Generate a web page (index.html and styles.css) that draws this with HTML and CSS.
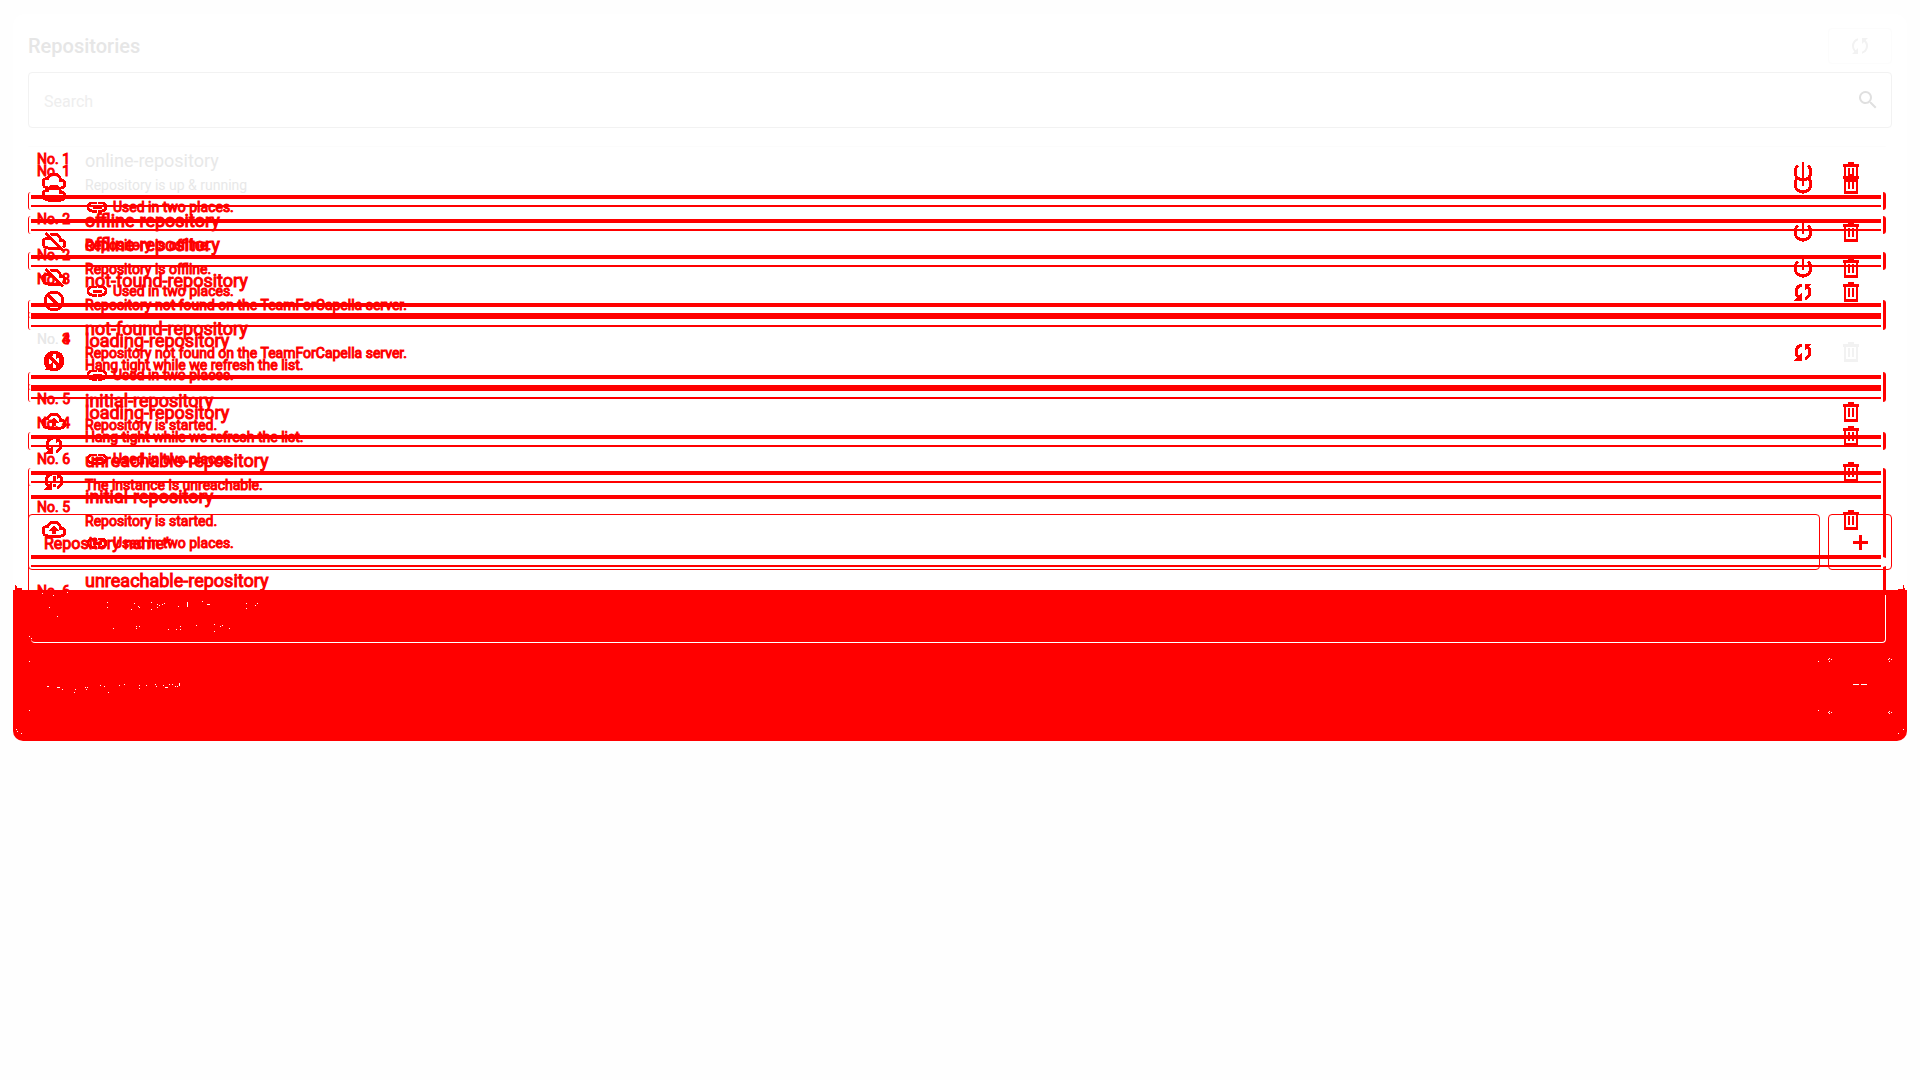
FILE: index.html
```
<!DOCTYPE html>
<html lang="en">
<head>
<meta charset="utf-8">
<title>Repositories</title>
<link rel="stylesheet" href="styles.css">
</head>
<body>
<svg class="sprite" aria-hidden="true">
  <symbol id="cloud" viewBox="0 0 24 24"><path d="M19.35 10.04A7.49 7.49 0 0 0 12 4C9.11 4 6.6 5.64 5.35 8.04A5.994 5.994 0 0 0 0 14c0 3.31 2.69 6 6 6h13c2.76 0 5-2.24 5-5 0-2.64-2.05-4.78-4.650-4.960zM19 18H6c-2.210 0-4-1.790-4-4s1.790-4 4-4h.71C7.370 7.690 9.480 6 12 6c3.040 0 5.500 2.460 5.500 5.500v.5H19c1.660 0 3 1.340 3 3s-1.340 3-3 3z"/></symbol>
  <symbol id="cloud-off" viewBox="0 0 24 24"><path d="M24 15c0-2.640-2.050-4.780-4.650-4.960A7.490 7.490 0 0 0 12 4c-1.330 0-2.570.36-3.650.97l1.490 1.490C10.510 6.170 11.230 6 12 6c3.040 0 5.500 2.460 5.500 5.500v.5H19a2.996 2.996 0 0 1 1.790 5.400l1.410 1.410c1.090-.92 1.800-2.270 1.800-3.810zM4.410 3.860 3 5.270l2.770 2.770h-.42A5.994 5.994 0 0 0 0 14c0 3.310 2.690 6 6 6h11.730l2 2 1.410-1.410zM7.730 10l8 8H6c-2.210 0-4-1.790-4-4s1.790-4 4-4h1.730z"/></symbol>
  <symbol id="block" viewBox="0 0 24 24"><path d="M12 2C6.480 2 2 6.480 2 12s4.480 10 10 10 10-4.480 10-10S17.520 2 12 2zM4 12c0-4.420 3.580-8 8-8 1.850 0 3.550.63 4.900 1.690L5.690 16.900A7.902 7.902 0 0 1 4 12zm8 8c-1.850 0-3.550-.63-4.900-1.690L18.310 7.100A7.902 7.902 0 0 1 20 12c0 4.420-3.580 8-8 8z" transform="translate(24 0) scale(-1 1)"/></symbol>
  <symbol id="sync" viewBox="0 0 24 24"><path d="M10 4.260v2.090a6 6 0 0 0-2.240 9.890L10 14v6H4l2.340-2.340A7.950 7.950 0 0 1 4 12c0-3.730 2.550-6.850 6-7.740zM20 4h-6v6l2.240-2.240A6 6 0 0 1 14 17.650v2.090a7.990 7.990 0 0 0 3.660-13.400z"/></symbol>
  <symbol id="problem" viewBox="0 0 24 24"><path d="M3 12c0 2.210.91 4.200 2.360 5.640L3 20h6v-6l-2.240 2.240A6.003 6.003 0 0 1 9 6.350V4.260C5.550 5.150 3 8.270 3 12zm8 5h2v-2h-2zM21 4h-6v6l2.240-2.240A6.003 6.003 0 0 1 15 17.650v2.090a7.990 7.990 0 0 0 3.640-13.380zM11 13h2V7h-2z"/></symbol>
  <symbol id="upload" viewBox="0 0 24 24"><path d="M19.350 10.040A7.490 7.490 0 0 0 12 4C9.110 4 6.600 5.640 5.350 8.040A5.994 5.994 0 0 0 0 14c0 3.310 2.690 6 6 6h13c2.760 0 5-2.240 5-5 0-2.640-2.050-4.780-4.650-4.960zM19 18H6c-2.210 0-4-1.790-4-4s1.790-4 4-4h.71C7.370 7.690 9.480 6 12 6c3.040 0 5.500 2.460 5.500 5.500v.5H19c1.660 0 3 1.340 3 3s-1.340 3-3 3zM8 13h2.550v3h2.900v-3H16l-4-4z"/></symbol>
  <symbol id="power" viewBox="0 0 24 24"><path d="M12.500 2h-1v11h1zm5.330 3.170-1.420 1.420A6.920 6.920 0 0 1 19 12a7 7 0 1 1-11.420-5.420L6.170 5.170A9 9 0 1 0 21 12c0-2.740-1.230-5.180-3.170-6.830z"/></symbol>
  <symbol id="trash" viewBox="0 0 24 24"><path d="M9 2v2H4v3h1v15h14V7h1V4h-5V2zM7 7h10v12H7zm2 1v9h2V8zm4 0v9h2V8z" fill-rule="evenodd" stroke="none"/></symbol>
  <symbol id="link" viewBox="0 0 24 24"><path d="M3.900 12A3.100 3.100 0 0 1 7 8.900h4V7H7a5 5 0 0 0 0 10h4v-1.900H7A3.100 3.100 0 0 1 3.900 12zM8 13h8v-2H8zm9-6h-4v1.900h4a3.100 3.100 0 0 1 0 6.200h-4V17h4a5 5 0 0 0 0-10z"/></symbol>
  <symbol id="search" viewBox="0 0 24 24"><path d="M15.500 14h-.79l-.28-.27A6.500 6.500 0 1 0 13.730 14.430l.27.28v.79l5 4.990L20.490 19zm-6 0a4.500 4.500 0 1 1 0-9 4.500 4.500 0 0 1 0 9z"/></symbol>
  <symbol id="plus" viewBox="0 0 24 24"><path d="M19 13h-6v6h-2v-6H5v-2h6V5h2v6h6z"/></symbol>
</svg>
<main class="panel">
  <header class="head">
    <h1 class="title">Repositories</h1>
    <button class="refresh" aria-label="Refresh"><svg class="icon"><use href="#sync"/></svg></button>
  </header>
  <label class="search"><input class="search-input" type="text" placeholder="Search" aria-label="Search"><svg class="icon"><use href="#search"/></svg></label>
  <div class="stack">
    <section class="layer">
      <ul class="list">
        <li class="card"><div class="state"><span>No. 1</span><svg class="icon"><use href="#cloud"/></svg></div><div class="info faint"><div class="name">online-repository</div><div class="note">Repository is up &amp; running</div></div><div class="actions"><button class="act" aria-label="Stop"><svg class="icon"><use href="#power"/></svg></button><button class="act" aria-label="Delete"><svg class="icon"><use href="#trash"/></svg></button></div></li>
        <li class="seam"></li>
        <li class="card"><div class="state"><span>No. 2</span><svg class="icon"><use href="#cloud-off"/></svg></div><div class="info"><div class="name">offline-repository</div><div class="note">Repository is offline.</div></div><div class="actions"><button class="act" aria-label="Start"><svg class="icon"><use href="#power"/></svg></button><button class="act" aria-label="Delete"><svg class="icon"><use href="#trash"/></svg></button></div></li>
        <li class="seam"></li>
        <li class="card"><div class="state"><span>No. 3</span><svg class="icon"><use href="#block"/></svg></div><div class="info"><div class="name">not-found-repository</div><div class="note">Repository not found on the TeamForCapella server.</div></div><div class="actions"><button class="act" aria-label="Recreate"><svg class="icon"><use href="#sync"/></svg></button><button class="act" aria-label="Delete"><svg class="icon"><use href="#trash"/></svg></button></div></li>
        <li class="seam"></li>
        <li class="card"><div class="state"><span><span class="faint">No.</span> 4</span><svg class="icon"><use href="#sync"/></svg></div><div class="info"><div class="name">loading-repository</div><div class="note">Hang tight while we refresh the list.</div></div><div class="actions"><button class="act pale" aria-label="Delete"><svg class="icon"><use href="#trash"/></svg></button></div></li>
        <li class="seam"></li>
        <li class="card"><div class="state"><span>No. 5</span><svg class="icon"><use href="#upload"/></svg></div><div class="info"><div class="name">initial-repository</div><div class="note">Repository is started.</div></div><div class="actions"><button class="act" aria-label="Delete"><svg class="icon"><use href="#trash"/></svg></button></div></li>
        <li class="seam"></li>
        <li class="card"><div class="state"><span>No. 6</span><svg class="icon"><use href="#problem"/></svg></div><div class="info"><div class="name">unreachable-repository</div><div class="note">The instance is unreachable.</div></div><div class="actions"><button class="act" aria-label="Delete"><svg class="icon"><use href="#trash"/></svg></button></div></li>
        <li class="seam seam-end"></li>
      </ul>
      <form class="form"><input class="field" type="text" placeholder="Repository name*" aria-label="Repository name"><button class="add" type="button" aria-label="Add"><svg class="icon"><use href="#plus"/></svg></button></form>
    </section>
    <section class="layer layer-tall">
      <ul class="list">
        <li class="card"><div class="state"><span>No. 1</span><svg class="icon"><use href="#cloud"/></svg></div><div class="info info-low"><div class="used"><svg class="icon"><use href="#link"/></svg>Used in two places.</div></div><div class="actions"><button class="act" aria-label="Stop"><svg class="icon"><use href="#power"/></svg></button><button class="act" aria-label="Delete"><svg class="icon"><use href="#trash"/></svg></button></div></li>
        <li class="seam"></li>
        <li class="card"><div class="state"><span>No. 2</span><svg class="icon"><use href="#cloud-off"/></svg></div><div class="info"><div class="name">offline-repository</div><div class="note">Repository is offline.</div><div class="used"><svg class="icon"><use href="#link"/></svg>Used in two places.</div></div><div class="actions"><button class="act" aria-label="Start"><svg class="icon"><use href="#power"/></svg></button><button class="act" aria-label="Delete"><svg class="icon"><use href="#trash"/></svg></button></div></li>
        <li class="seam"></li>
        <li class="card"><div class="state"><span><span class="faint">No.</span> 3</span><svg class="icon"><use href="#block"/></svg></div><div class="info"><div class="name">not-found-repository</div><div class="note">Repository not found on the TeamForCapella server.</div><div class="used"><svg class="icon"><use href="#link"/></svg>Used in two places.</div></div><div class="actions"><button class="act" aria-label="Recreate"><svg class="icon"><use href="#sync"/></svg></button><button class="act pale" aria-label="Delete"><svg class="icon"><use href="#trash"/></svg></button></div></li>
        <li class="seam"></li>
        <li class="card"><div class="state"><span>No. 4</span><svg class="icon"><use href="#sync"/></svg></div><div class="info"><div class="name">loading-repository</div><div class="note">Hang tight while we refresh the list.</div><div class="used"><svg class="icon"><use href="#link"/></svg>Used in two places.</div></div><div class="actions"><button class="act" aria-label="Delete"><svg class="icon"><use href="#trash"/></svg></button></div></li>
        <li class="seam"></li>
        <li class="card outlined"><div class="state"><span>No. 5</span><svg class="icon"><use href="#upload"/></svg></div><div class="info"><div class="name">initial-repository</div><div class="note">Repository is started.</div><div class="used"><svg class="icon"><use href="#link"/></svg>Used in two places.</div></div><div class="actions"><button class="act" aria-label="Delete"><svg class="icon"><use href="#trash"/></svg></button></div></li>
        <li class="seam seam-open"></li>
        <li class="card outlined"><div class="state"><span>No. 6</span><svg class="icon"><use href="#problem"/></svg></div><div class="info"><div class="name">unreachable-repository</div><div class="note">The instance is unreachable.</div><div class="used"><svg class="icon"><use href="#link"/></svg>Used in two places.</div></div><div class="actions"><button class="act" aria-label="Delete"><svg class="icon"><use href="#trash"/></svg></button></div></li>
      </ul>
    </section>
    <div class="fill" aria-hidden="true">
      <svg class="specks" viewBox="39 90 780 453"><path class="tip" d="M39 102V93h6V75h3v3h3v6h15v6H819v6H60z"/><path d="M321 128h3m-3 14h3m69 6h3m6-18h3m9 8h3m0 3h3m33-13h3m-3 20h3m15-16h3m-3 9h3m3-6h3m6-3h3m3-3h3m39 9h3m69-14h3m12 8h9m108-2h3m-3 15h3m24-10h3m3-5h3M147 142h3m21 27h3M126 100h3m30 6h3m39-9h3M339 205h3m66-5h3m-3 5h3m6-5h3m84 8h3m21 0h3m9-10h3m-3 10h3m45-12h3m51-3h3m-3 21h3m14-15h3m4-2h3m18 8h3M87 230h3m3 6h3m-9 68h3M141 379h6m24 2h9m6 7h3m33 9h3m0-9h3m27-7h3m3 0h3m-6 7h3m39-12h3m9 3h3m9 18h3m30-21h3m12-3h3m42 3h3m-3 9h3m18-9h3m24-3h3m0 6h3m18-3h3m3 6h9m3-9h3m6 0h3m6 6h3m3 0h3M87 451h3M48 508h3m0 6h3m9 6h3M562 126v15M538 370v8"/></svg>
      <div class="edge"></div>
      <svg class="specks" viewBox="201 90 300 453"><path class="tip" d="M201 96V90h273v-3h15V75h3v9h3v6h3v12h3v6z"/><path d="M234 304h3m27-6h3m6 0h3m-9-3h3m-3 8h3m174-5h3m6 0h3m-9-3h3m-3 8h3M339 373h18m6 0h18M234 451h3m27 5h3m6 0h3m-9-3h3m-3 8h3m174-5h3m6 0h3m-9-3h3m-3 8h3M489 508h3m-18 12h3"/></svg>
    </div>
  </div>
</main>
</body>
</html>
```
FILE: styles.css
```
*, *::before { box-sizing: border-box; }
body { margin: 0; padding: 14px 13px; background: #fefefe; color: #f00; font-family: Roboto, "Liberation Sans", sans-serif; }
.sprite { position: absolute; width: 0; height: 0; }
.panel { background: #fff; border-radius: 12px; padding: 14px 15px 0; }
.icon { display: block; flex: none; width: 24px; height: 24px; fill: currentColor; }
button { padding: 0; background: none; color: inherit; display: flex; align-items: center; justify-content: center; font: inherit; }
.head { display: flex; justify-content: space-between; align-items: center; height: 36px; }
.title { margin: 0; font-size: 20px; line-height: 28px; font-weight: 500; color: #e6e6e6; }
.refresh { width: 64px; height: 36px; border: 1px solid #fcfcfc; border-radius: 4px; color: #f2f2f2; }
.search { display: flex; align-items: center; height: 56px; margin-top: 8px; padding: 0 11px 0 15px; border: 1px solid #f2f2f2; border-radius: 4px; color: #e0e0e0; }
.search-input { flex: 1; border: 0; padding: 4px 0 0; background: none; outline: 0; font: 16px/24px Roboto, "Liberation Sans", sans-serif; }
.search-input::placeholder { color: #eee; opacity: 1; }

.stack { display: grid; padding-top: 18px; }
.layer, .fill { grid-area: 1 / 1; min-width: 0; }
.layer-tall { padding-bottom: 99px; }
.list { list-style: none; margin: 0 6px 0 0; padding: 0; }
.card { display: flex; height: 52px; border: 1px solid transparent; padding: 0 10px 0 8px; }
.layer-tall .card { height: 76px; }
.layer:first-child .card:first-child { border-top-color: #fcfcfc; }
.outlined { border-left-color: #f00; border-right: 3px solid #f00; padding-right: 8px; }
.state { width: 48px; display: flex; flex-direction: column; justify-content: center; padding-bottom: 3px; font-size: 14px; line-height: 20px; }
.state .icon { margin-left: 5px; }
.state > span, .name, .note, .used { -webkit-text-stroke: 1px currentColor; white-space: nowrap; }
.info { flex: 1; padding-top: 2px; }
.info-low { padding-top: 50px; }
.name { font-size: 18px; line-height: 24px; }
.note { font-size: 14px; line-height: 24px; }
.used { display: flex; align-items: center; gap: 4px; height: 20px; font-size: 14px; line-height: 20px; }
.faint { color: #e8e8e8; -webkit-text-stroke: 0; }
.faint .name, .faint .note { -webkit-text-stroke: 0; }
.actions { display: flex; align-items: center; }
.act { width: 48px; height: 48px; border: 0; }
.pale { color: #f2f2f2; }
.card .icon { shape-rendering: crispEdges; }
.state .icon, .card button:not(.pale) .icon, .used .icon { stroke: currentColor; stroke-width: 1px; }

.seam { height: 18px; margin: -6px 0 -4px; padding: 3px 2px; border: solid #f00; border-width: 0 3px 0 1px; border-radius: 3px; }
.seam::before { content: ""; display: block; height: 12px; border: solid #f00; border-width: 4px 0 2px; }
.seam-end { margin-bottom: -12px; border-color: transparent; }
.seam-end::before { border-bottom-color: transparent; }
.seam-open { border-color: transparent; }

.form { display: flex; gap: 8px; margin-top: 16px; }
.field { flex: 1; min-width: 0; height: 56px; border: 1px solid #f00; border-radius: 4px; padding: 2px 15px 0; background: none; font: 16px/24px Roboto, "Liberation Sans", sans-serif; }
.field::placeholder { color: #f00; opacity: 1; -webkit-text-stroke: 1px #f00; }
.add { width: 64px; height: 56px; border: 1px solid #f00; border-radius: 4px; }
.add .icon { stroke: currentColor; shape-rendering: crispEdges; }

.fill { align-self: end; display: flex; height: 151px; margin: 0 -15px; background: #f00; border-radius: 0 0 10px 10px; }
.specks { flex: none; width: 260px; height: 151px; overflow: visible; fill: none; stroke: #fff; stroke-width: 3px; shape-rendering: crispEdges; }
.specks:last-child { width: 100px; }
.specks .tip { fill: #f00; stroke: none; }
.edge { flex: 1; height: 53px; margin: 0 -79px 0 -242px; border: solid #fff; border-width: 0 1px 1px 0; border-radius: 0 0 4px 4px; }
```
